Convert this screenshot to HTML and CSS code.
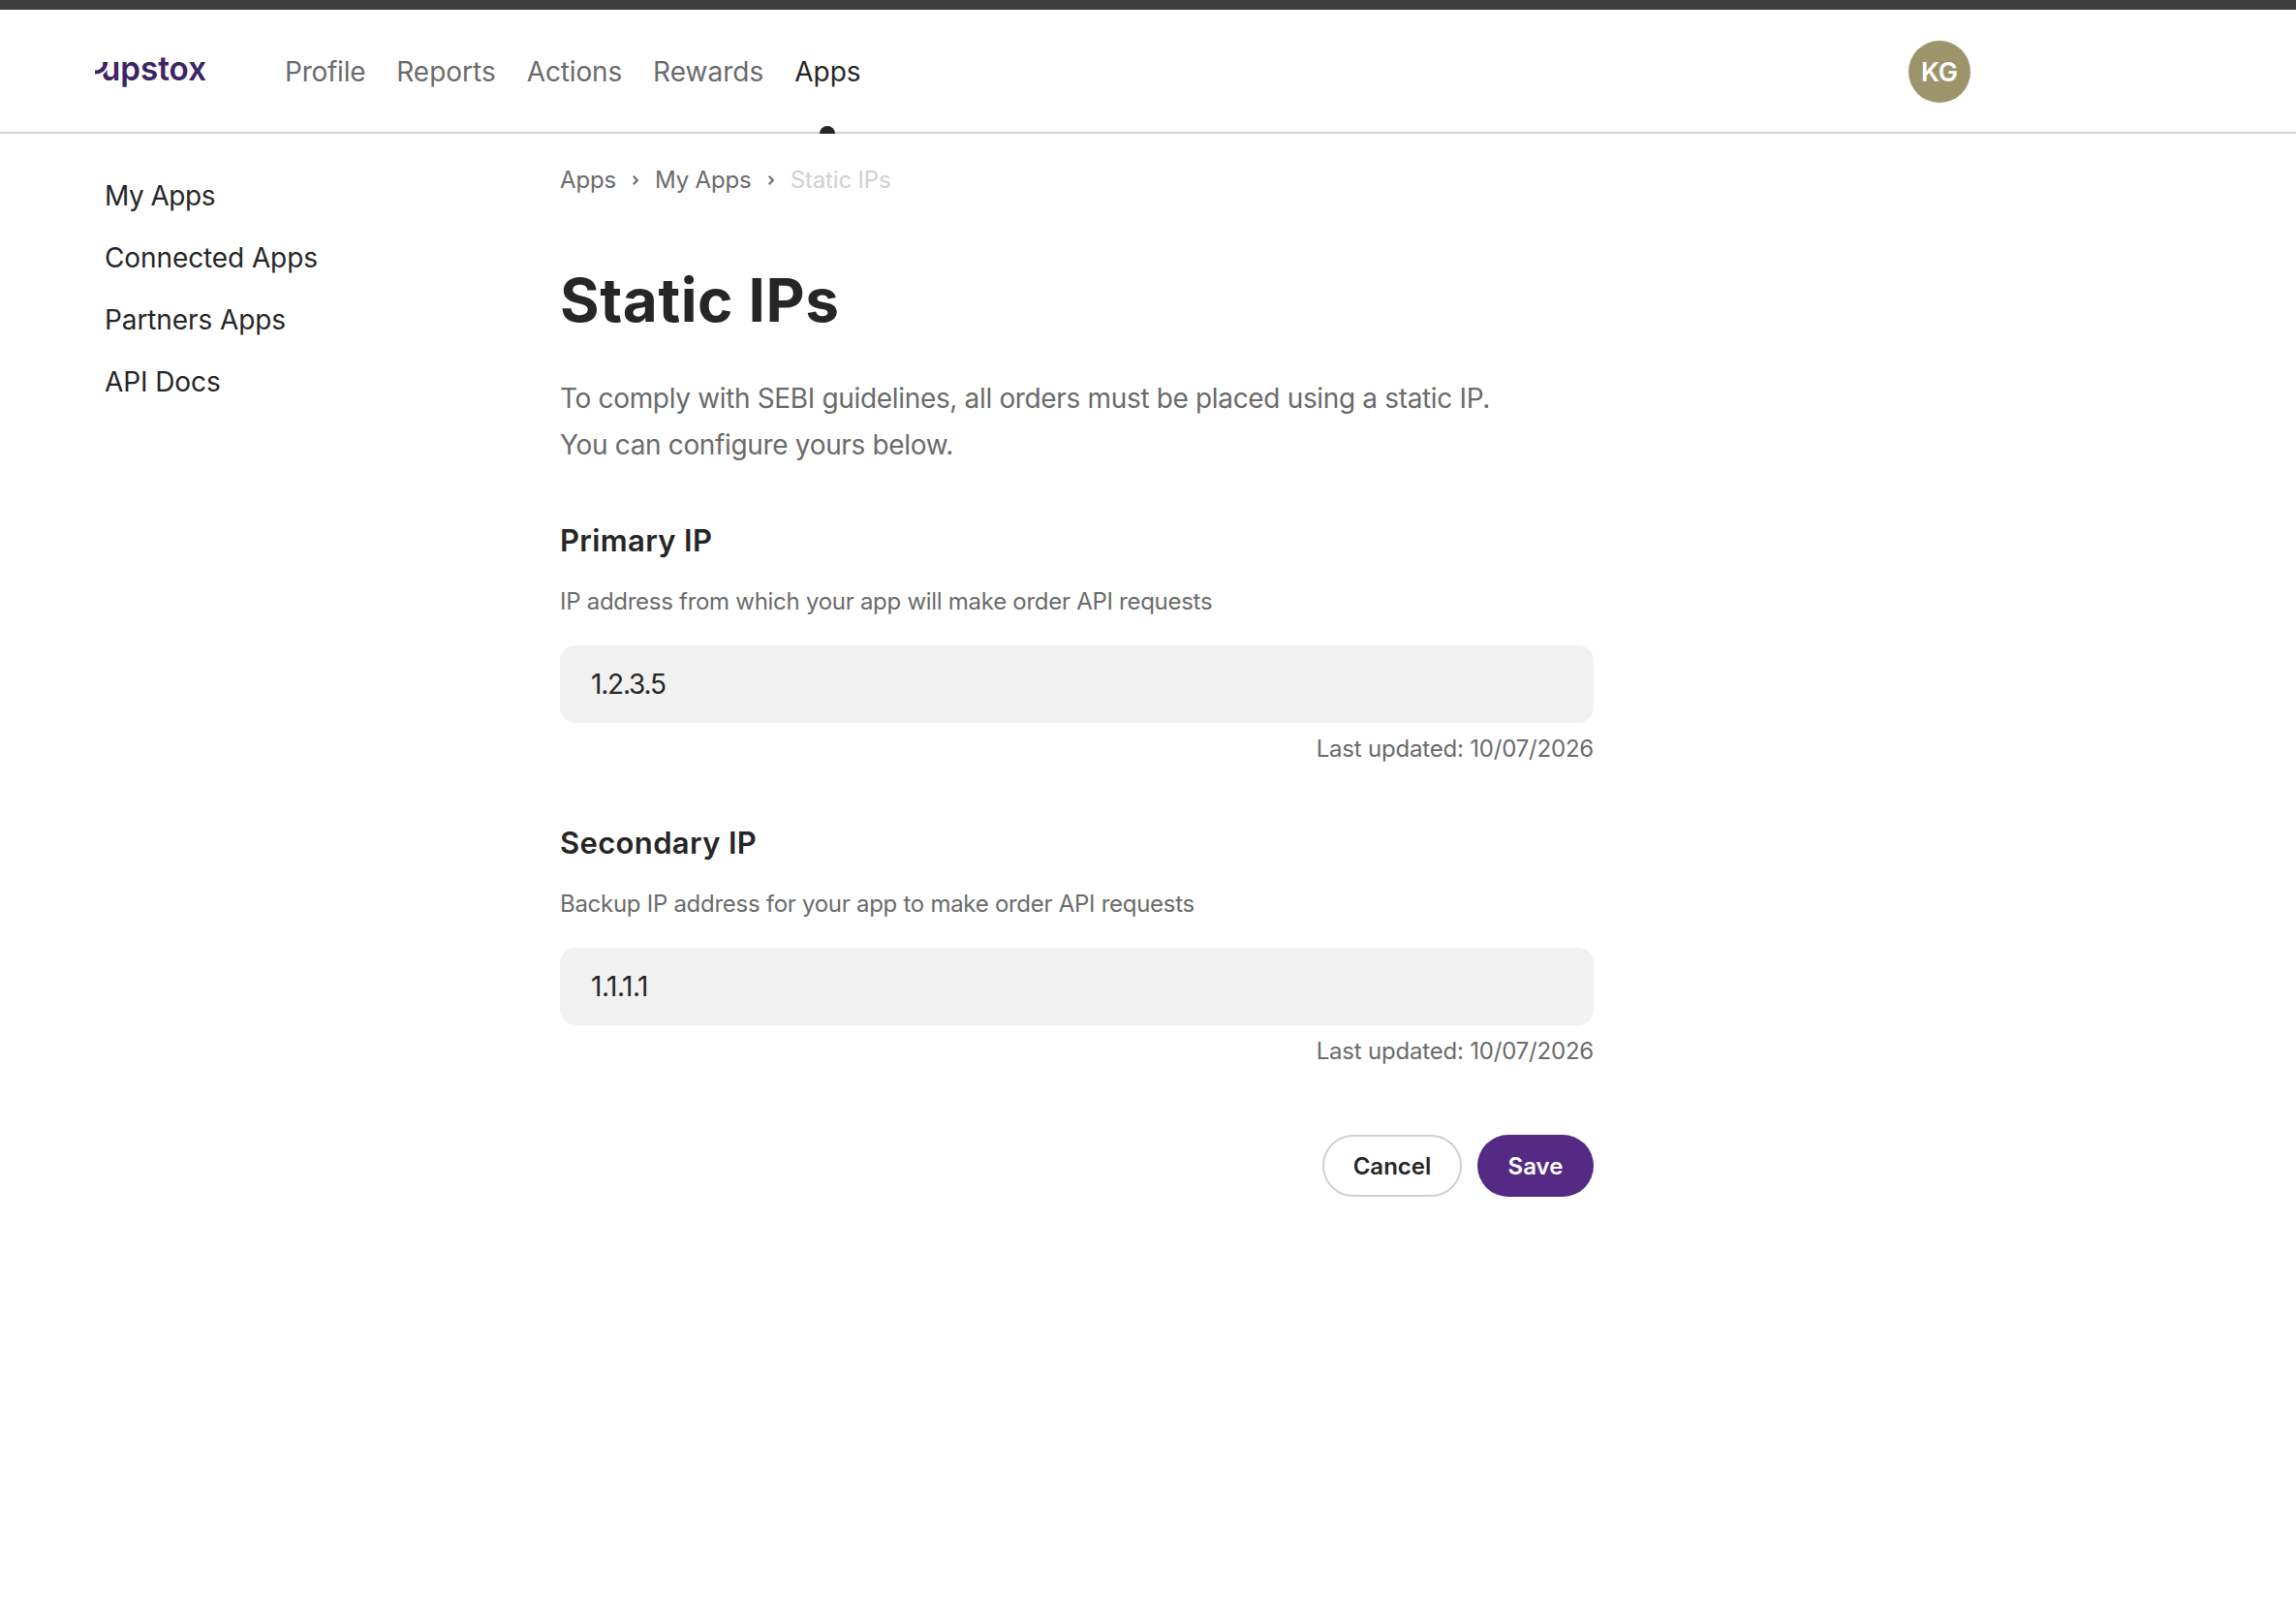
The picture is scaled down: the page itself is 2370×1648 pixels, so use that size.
FILE: index.html
```html
<!DOCTYPE html>
<html lang="en">
<head>
  <meta charset="UTF-8" />
  <meta name="viewport" content="width=device-width, initial-scale=1.0" />
  <title>Static IPs - Upstox</title>
  <link rel="stylesheet" href="styles.css">
</head>
<body>

<header>
  <a class="logo" href="#">
    <svg width="116" height="40" viewBox="0 0 116 40">
      <text x="6" y="29" textLength="109" lengthAdjust="spacingAndGlyphs">upstox</text>
      <path class="gap" d="M4 23.6 C9 22.5 12.5 19 14.4 10" />
      <path class="swoosh" d="M0 20.6 C6.5 20.6 10 17.5 11.4 10" />
    </svg>
  </a>
  <nav>
    <a href="#" class="profile">Profile</a>
    <a href="#">Reports</a>
    <a href="#" class="actions">Actions</a>
    <a href="#">Rewards</a>
    <a href="#" class="active">Apps</a>
  </nav>
  <div class="avatar">KG</div>
</header>

<div class="layout">
  <aside>
    <a href="#" class="my-apps">My Apps</a>
    <a href="#">Connected Apps</a>
    <a href="#">Partners Apps</a>
    <a href="#">API Docs</a>
  </aside>

  <main>
    <div class="breadcrumb">
      <a href="#">Apps</a>
      <svg width="6" height="10" viewBox="0 0 6 10"><path d="M0.8 0.8 L4.8 5 L0.8 9.2" /></svg>
      <a href="#">My Apps</a>
      <svg width="6" height="10" viewBox="0 0 6 10"><path d="M0.8 0.8 L4.8 5 L0.8 9.2" /></svg>
      <span>Static IPs</span>
    </div>

    <h1>Static IPs</h1>
    <p class="intro">To comply with SEBI guidelines, all orders must be placed using a static IP.<br>You can configure yours below.</p>

    <section>
      <h2>Primary IP</h2>
      <p class="hint">IP address from which your app will make order API requests</p>
      <input type="text" class="primary" value="1.2.3.5">
      <p class="updated">Last updated: 10/07/2026</p>
    </section>

    <section>
      <h2>Secondary IP</h2>
      <p class="hint">Backup IP address for your app to make order API requests</p>
      <input type="text" value="1.1.1.1">
      <p class="updated">Last updated: 10/07/2026</p>
    </section>

    <div class="buttons">
      <button class="cancel">Cancel</button>
      <button class="save">Save</button>
    </div>
  </main>
</div>

</body>
</html>
```
FILE: styles.css
```css
* { box-sizing: border-box; }
body { font-family: Inter, "Liberation Sans", sans-serif; font-size: 28px; margin: 0; background: #fff; color: #262626; border-top: 10px solid #3d3d3d; }
a { color: inherit; text-decoration: none; }
h1, h2, p { margin: 0; }

header { display: flex; align-items: center; height: 128px; padding-top: 2px; padding-left: 98px; border-bottom: 2px solid #d0d0d0; }
.logo { width: 196px; height: 40px; }
.logo svg { display: block; overflow: visible; }
.logo text { font-size: 35px; font-weight: 600; fill: #3c2465; }
.logo path { fill: none; }
.logo .swoosh { stroke: #3c2465; stroke-width: 4; }
.logo .gap { stroke: #fff; stroke-width: 2; }

nav { display: flex; gap: 32px; color: #6b6b6b; }
nav a { line-height: 124px; }
nav .profile { letter-spacing: -0.25px; }
nav .actions { letter-spacing: -0.15px; }
nav .active { position: relative; color: #262626; }
/* half dot sitting on the header line */
nav .active::after { content: ""; position: absolute; left: 50%; bottom: -2px; width: 16px; height: 8px; margin-left: -8px; border-radius: 8px 8px 0 0; background: #262626; }
.avatar { display: flex; align-items: center; justify-content: center; width: 64px; height: 64px; margin-left: auto; margin-right: 336px; padding-top: 1px; border-radius: 50%; background: #9c956c; color: #fff; font: 600 27px Inter, "Liberation Sans", sans-serif; }

.layout { display: flex; padding-top: 32px; }
aside { display: flex; flex-direction: column; width: 578px; padding-left: 108px; letter-spacing: -0.1px; }
aside a { line-height: 64px; }
aside .my-apps { letter-spacing: -0.5px; }
main { width: 1067px; }

.breadcrumb { display: flex; align-items: center; gap: 17px; padding-top: 1px; font-size: 24px; line-height: 30px; letter-spacing: -0.15px; color: #6b6b6b; }
.breadcrumb path { fill: none; stroke: #6b6b6b; stroke-width: 2; }
.breadcrumb span { color: #d0d0d0; }

h1 { margin-top: 73px; font-size: 62px; font-weight: 650; line-height: 72px; letter-spacing: 0.6px; }
.intro { margin-top: 41px; line-height: 48px; letter-spacing: -0.34px; color: #6b6b6b; }

section { margin-top: 61px; }
.intro + section { margin-top: 55px; }
h2 { font-size: 31px; font-weight: 600; line-height: 40px; letter-spacing: 0.35px; }
.hint { margin-top: 27px; font-size: 24px; line-height: 32px; letter-spacing: -0.28px; color: #6b6b6b; }
input { display: block; width: 100%; height: 80px; margin-top: 29px; padding: 0 32px; border: none; border-radius: 16px; background: #f1f1f1; color: #262626; font: inherit; letter-spacing: -0.5px; }
input.primary { letter-spacing: -1.2px; }
.updated { margin-top: 11px; font-size: 24px; line-height: 32px; letter-spacing: -0.2px; text-align: right; color: #6b6b6b; }

.buttons { display: flex; justify-content: flex-end; gap: 16px; margin-top: 70px; }
.buttons button { height: 64px; padding: 0; border-radius: 32px; font-family: inherit; font-size: 24px; font-weight: 600; }
.cancel { width: 144px; border: 2px solid #d0d0d0; background: #fff; color: #262626; }
.save { width: 120px; border: none; background: #542a85; color: #fff; }
```
